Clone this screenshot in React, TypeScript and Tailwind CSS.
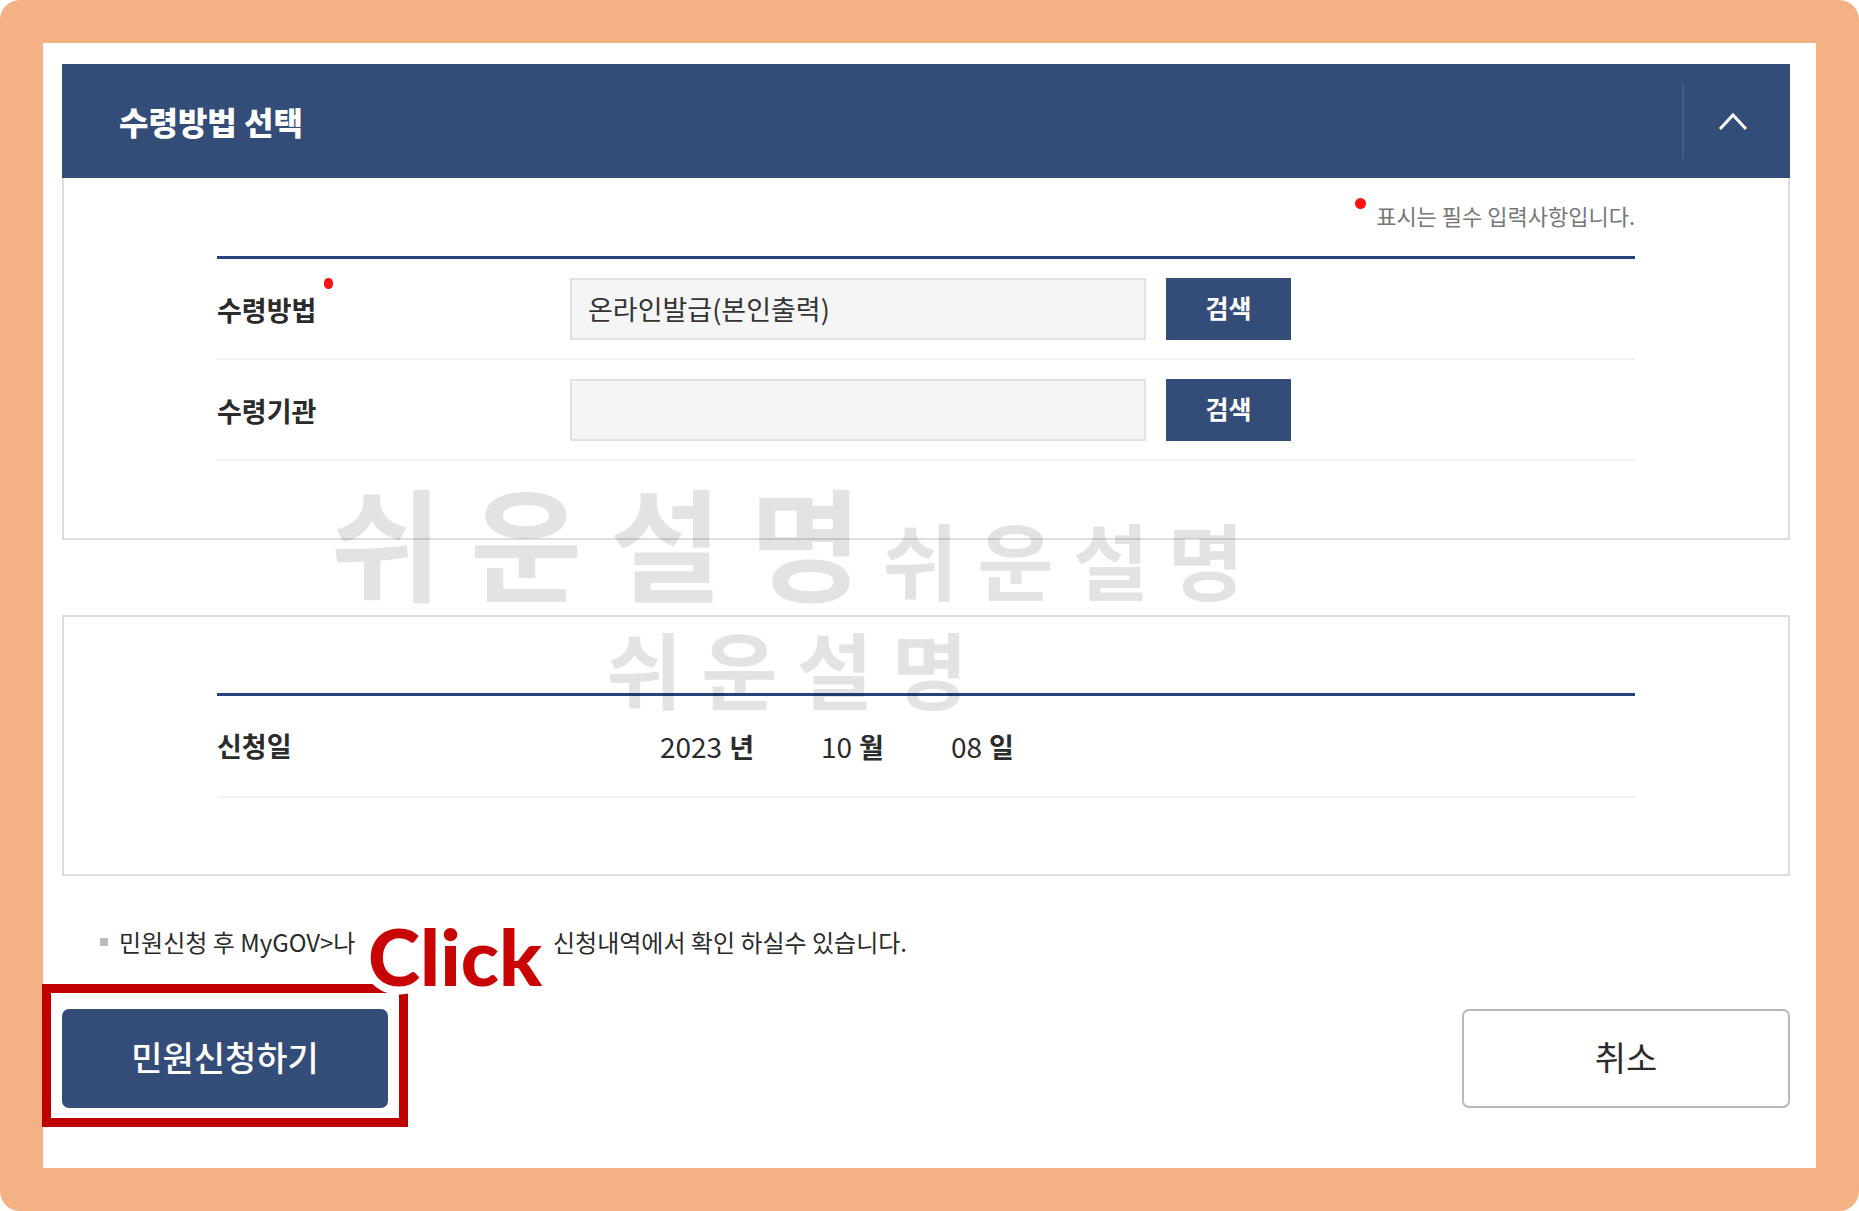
import { useState } from "react";

type FieldProps = {
  id: string;
  label: string;
  value: string;
  required?: boolean;
};

function SearchField({ id, label, value, required }: FieldProps) {
  return (
    <div className="flex h-[101px] items-center border-b-2 border-[#f1f1f1]">
      <label htmlFor={id} className="relative w-[353px] shrink-0 pt-1 text-[27px] font-bold">
        {label}
        {required && (
          <span className="absolute -top-2 left-[107px] h-[11px] w-[9px] rounded-full bg-[#fc1212]" aria-hidden />
        )}
      </label>
      <input
        id={id}
        type="text"
        readOnly
        defaultValue={value}
        className="h-[62px] min-w-0 max-w-[576px] flex-1 border-2 border-[#e1e1e1] bg-[#f5f5f5] px-4 text-[27px] text-[#333]"
      />
      <button
        type="button"
        aria-label={`${label} 검색`}
        className="ml-5 h-[62px] w-[125px] shrink-0 bg-[#334c78] pb-0.5 text-[25px] font-bold text-white"
      >
        검색
      </button>
    </div>
  );
}

const dateParts = [
  { value: "2023", unit: "년" },
  { value: "10", unit: "월" },
  { value: "08", unit: "일" },
];

const watermarks = [
  { id: "large", className: "left-[287px] top-[407px] text-[122px]" },
  { id: "right", className: "left-[839px] top-[455px] text-[83px]" },
  { id: "lower", className: "left-[563px] top-[564px] text-[83px]" },
];

export default function App() {
  const [open, setOpen] = useState(true);

  return (
    <div className="min-h-screen bg-white font-['Noto_Sans_CJK_KR','Noto_Sans',sans-serif] text-[#2b2b2b]">
      <div className="flex min-h-screen rounded-[20px] bg-[#f4b183] p-[43px]">
        <main className="relative flex-1 bg-white pt-[21px] pr-[26px] pl-[19px]">
          <section>
            <header className="flex h-[114px] items-center justify-between bg-[#334c78] pl-[57px] text-white">
              <h1 className="text-[32px] font-black">수령방법 선택</h1>
              <button
                type="button"
                aria-label="수령방법 선택 접기"
                aria-expanded={open}
                onClick={() => setOpen(!open)}
                className="flex h-[76px] w-[108px] items-center justify-center border-l-2 border-[#455b84] pr-2"
              >
                <svg width="30" height="20" viewBox="0 0 30 20" fill="none" stroke="currentColor" strokeWidth="3" aria-hidden>
                  <path d="M2 18 15 4l13 14" />
                </svg>
              </button>
            </header>
            {open && (
              <div className="border-2 border-t-0 border-[#ddd] px-[153px] pb-[77px]">
                <p className="flex h-[78px] items-center justify-end gap-[10px] pb-1 text-[22px] text-[#777]">
                  <span className="mb-6 size-[11px] rounded-full bg-[#fc1212]" aria-hidden />
                  표시는 필수 입력사항입니다.
                </p>
                <div className="border-t-3 border-[#26437a]">
                  <SearchField id="method" label="수령방법" value="온라인발급(본인출력)" required />
                  <SearchField id="agency" label="수령기관" value="" />
                </div>
              </div>
            )}
          </section>

          <section className="mt-[75px] border-2 border-[#ddd] px-[153px] py-[76px]">
            <div className="flex h-[105px] items-center border-t-3 border-b-2 border-t-[#26437a] border-b-[#f1f1f1]">
              <h2 className="w-[443px] shrink-0 text-[27px] font-bold">신청일</h2>
              <div className="flex gap-[67px]">
                {dateParts.map((part) => (
                  <p key={part.unit} className="flex items-baseline gap-[7px] text-[28px]">
                    {part.value}
                    <b className="text-[27px]">{part.unit}</b>
                  </p>
                ))}
              </div>
            </div>
          </section>

          <p className="mt-12 flex h-9 items-center pl-[38px] text-[24px]">
            <span className="mr-[11px] size-2 bg-[#bbb]" aria-hidden />
            <span className="w-[434px]">민원신청 후 MyGOV&gt;나</span>
            <span>신청내역에서 확인 하실수 있습니다.</span>
          </p>

          <div className="mt-[49px] flex justify-between pb-[60px]">
            <div className="relative">
              <button
                type="button"
                className="h-[99px] w-[326px] rounded-[7px] bg-[#334c78] pb-1 text-[34px] font-medium text-white"
              >
                민원신청하기
              </button>
              <div className="pointer-events-none absolute -top-[25px] -right-5 -bottom-[19px] -left-5 border-9 border-[#c00000]" />
              <span className="pointer-events-none absolute -top-[99px] left-[306px] font-['Lato',sans-serif] text-[79px] leading-[92px] font-black text-[#c80404] [paint-order:stroke] [-webkit-text-stroke:16px_white]">
                Click
              </span>
            </div>
            <button
              type="button"
              className="h-[99px] w-[328px] rounded-[7px] border-2 border-[#b8b8b8] bg-white pb-1 text-[34px]"
            >
              취소
            </button>
          </div>

          {watermarks.map((mark) => (
            <span
              key={mark.id}
              aria-hidden
              className={`pointer-events-none absolute leading-[normal] font-bold whitespace-nowrap text-black/11 ${mark.className}`}
            >
              쉬 운 설 명
            </span>
          ))}
        </main>
      </div>
    </div>
  );
}
